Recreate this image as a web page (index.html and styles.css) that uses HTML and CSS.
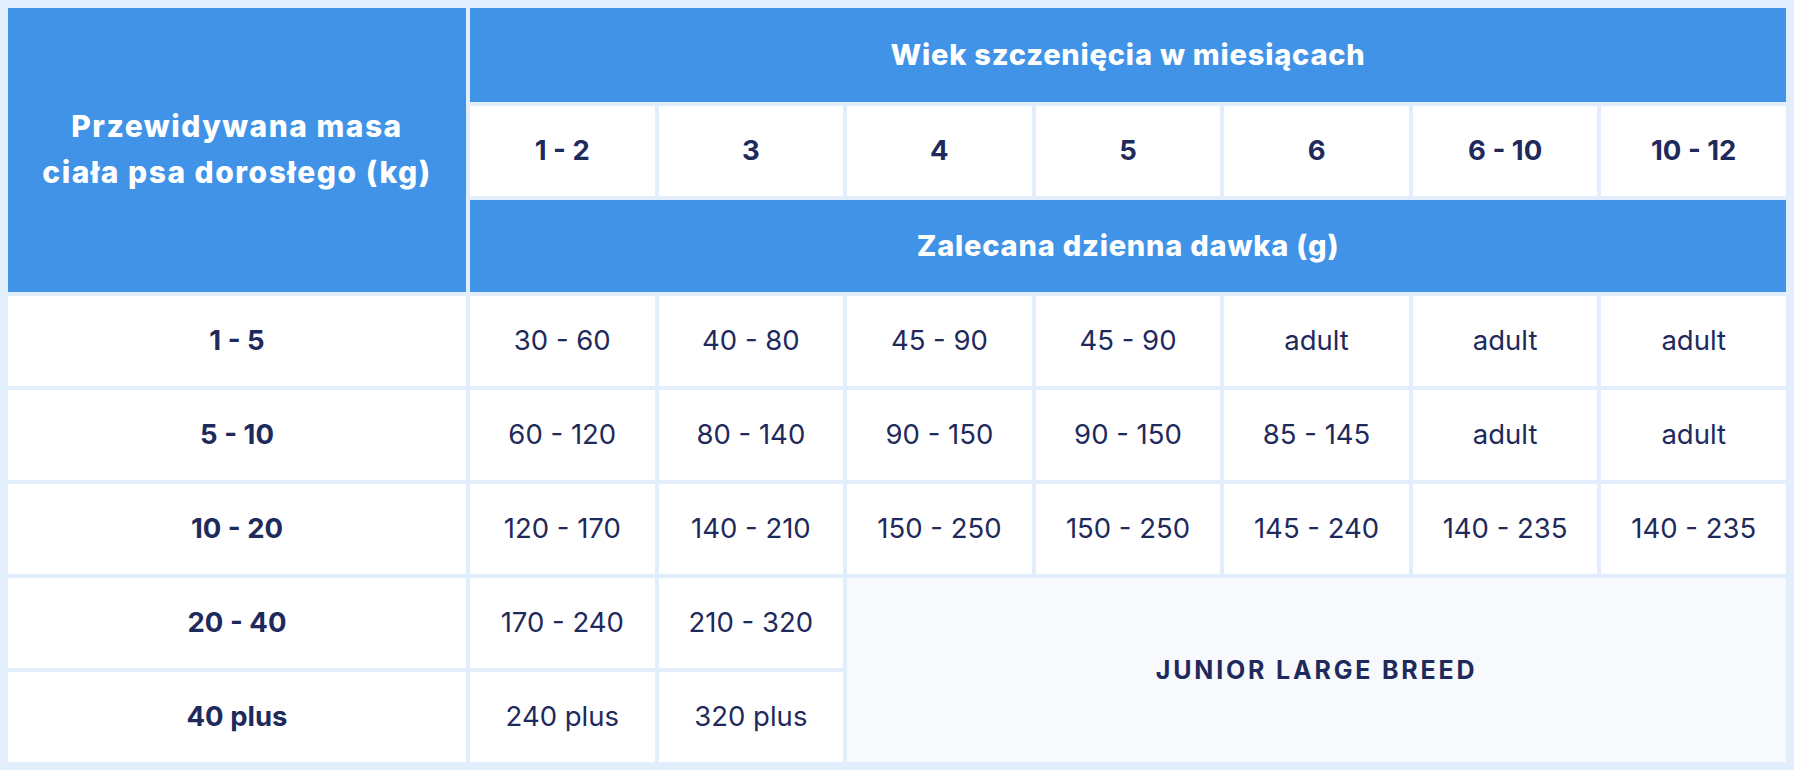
FILE: index.html
```html
<!DOCTYPE html>
<html lang="pl">
<head>
<meta charset="utf-8">
<title>Dawkowanie</title>
<link rel="stylesheet" href="styles.css">
</head>
<body>
<div class="table">
  <div class="cell head corner">Przewidywana masa<br>ciała psa dorosłego (kg)</div>
  <div class="cell head span7">Wiek szczenięcia w miesiącach</div>
  <div class="cell age">1 - 2</div>
  <div class="cell age">3</div>
  <div class="cell age">4</div>
  <div class="cell age">5</div>
  <div class="cell age">6</div>
  <div class="cell age">6 - 10</div>
  <div class="cell age">10 - 12</div>
  <div class="cell head span7">Zalecana dzienna dawka (g)</div>

  <div class="cell weight">1 - 5</div>
  <div class="cell">30 - 60</div>
  <div class="cell">40 - 80</div>
  <div class="cell">45 - 90</div>
  <div class="cell">45 - 90</div>
  <div class="cell">adult</div>
  <div class="cell">adult</div>
  <div class="cell">adult</div>

  <div class="cell weight">5 - 10</div>
  <div class="cell">60 - 120</div>
  <div class="cell">80 - 140</div>
  <div class="cell">90 - 150</div>
  <div class="cell">90 - 150</div>
  <div class="cell">85 - 145</div>
  <div class="cell">adult</div>
  <div class="cell">adult</div>

  <div class="cell weight">10 - 20</div>
  <div class="cell">120 - 170</div>
  <div class="cell">140 - 210</div>
  <div class="cell">150 - 250</div>
  <div class="cell">150 - 250</div>
  <div class="cell">145 - 240</div>
  <div class="cell">140 - 235</div>
  <div class="cell">140 - 235</div>

  <div class="cell weight">20 - 40</div>
  <div class="cell">170 - 240</div>
  <div class="cell">210 - 320</div>
  <div class="cell junior">JUNIOR LARGE BREED</div>

  <div class="cell weight">40 plus</div>
  <div class="cell">240 plus</div>
  <div class="cell">320 plus</div>
</div>
</body>
</html>
```

FILE: styles.css
```css
html, body {
  margin: 0;
  padding: 0;
  background: #e3eefc;
}

body {
  font-family: Inter, "Noto Sans", "Liberation Sans", sans-serif;
  color: #1f2a5c;
}

.table {
  display: grid;
  grid-template-columns: 458px repeat(7, 1fr);
  grid-template-rows: 94px 90px 92px repeat(5, 90px);
  gap: 4px;
  padding: 8px;
  background: #e3eefc;
}

.cell {
  background: #ffffff;
  display: flex;
  align-items: center;
  justify-content: center;
  text-align: center;
  font-size: 27.5px;
  font-weight: 400;
  line-height: 1.3;
}

.head {
  background: #4193e8;
  color: #ffffff;
  font-size: 29px;
  font-weight: 800;
  letter-spacing: 0.8px;
}

.corner {
  grid-row: 1 / span 3;
  font-size: 30px;
  letter-spacing: 1.5px;
  line-height: 1.53;
}

.span7 {
  grid-column: 2 / span 7;
}

.age,
.weight {
  font-size: 27.5px;
  font-weight: 700;
}

.junior {
  grid-column: 4 / span 5;
  grid-row: 7 / span 2;
  background: #f7f9fd;
  font-weight: 700;
  font-size: 25px;
  letter-spacing: 2.8px;
}
```
